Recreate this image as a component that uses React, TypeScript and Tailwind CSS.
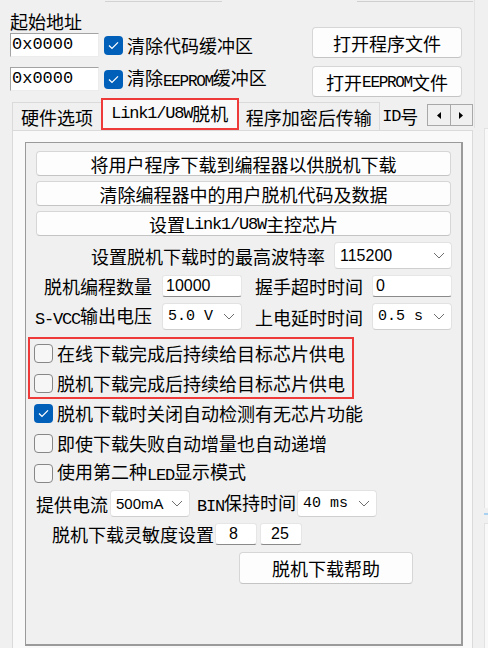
import React from "react";

function Box({ checked }: { checked?: boolean }) {
  if (checked)
    return (
      <span className="flex h-[19px] w-[19px] shrink-0 items-center justify-center rounded-[4px] bg-[#005fb8]">
        <svg width="11" height="9" viewBox="0 0 11 9" fill="none">
          <path d="M1 4.6L4 7.4L10 1.4" stroke="#ffffff" strokeWidth="1.3" />
        </svg>
      </span>
    );
  return <span className="h-[19px] w-[19px] shrink-0 rounded-[4px] border border-[#878787] bg-[#f6f6f6]" />;
}

function Chevron() {
  return (
    <svg width="12" height="7" viewBox="0 0 12 7" fill="none" className="shrink-0">
      <path d="M1 1L6 6L11 1" stroke="#6e6e6e" strokeWidth="1" />
    </svg>
  );
}

function Select({ value, className, textClass }: { value: string; className: string; textClass: string }) {
  return (
    <div
      className={`flex h-[27px] shrink-0 items-center justify-between rounded-[4px] border border-[#e2e2e2] border-b-[#cfcfcf] bg-white pl-[5px] pr-[6px] ${className}`}
    >
      <span className={textClass}>{value}</span>
      <Chevron />
    </div>
  );
}

function Field({ value, className }: { value: string; className: string }) {
  return (
    <div
      className={`flex h-[22px] shrink-0 items-center rounded-[3px] border border-[#e6e6e6] border-b-[#8a8a8a] bg-white font-['Liberation_Sans',sans-serif] text-[16px] ${className}`}
    >
      {value}
    </div>
  );
}

function Btn({ children, className }: { children: React.ReactNode; className: string }) {
  return (
    <div
      className={`flex shrink-0 items-center justify-center rounded-[4px] border border-[#d6d6d6] border-b-[#c4c4c4] bg-[#fdfdfd] leading-[20px] ${className}`}
    >
      {children}
    </div>
  );
}

function CheckRow({ checked, children, className }: { checked?: boolean; children: React.ReactNode; className: string }) {
  return (
    <div className={`flex h-[28px] items-center ${className}`}>
      <Box checked={checked} />
      <span className="ml-[4px] leading-[22px]">{children}</span>
    </div>
  );
}

// half-width latin inside chinese labels
const mono = "relative top-[1px] font-['Liberation_Mono',monospace] text-[17px] tracking-[-1.2px]";
const monoNarrow = "relative top-[1px] font-['Liberation_Mono',monospace] text-[16px] tracking-[-1.3px]";

export default function App() {
  return (
    <div className="flex h-[648px] w-[488px] overflow-hidden bg-[#f0f0f0] font-['Noto_Sans_CJK_SC',sans-serif] text-[18px] leading-[22px] text-black">
      <div className="flex w-[473px] shrink-0 flex-col">
        {/* bottoms of controls scrolled off the top */}
        <div className="flex h-[2px]">
          <div className="ml-[105px] w-[117px] border-b border-[#d2d2d2]" />
          <div className="ml-[135px] w-[117px] border-b border-[#cfcfcf]" />
        </div>

        <div className="flex h-[96px]">
          <div className="w-[312px] pl-[10px] pt-[7px]">
            <div className="h-[24px] leading-[24px]">起始地址</div>
            <div className="flex h-[24px] items-center">
              <div className="flex h-full w-[89px] items-center border border-[#ececec] border-l-[#a3a3a3] border-t-[#a3a3a3] bg-white pl-[1px] font-['Liberation_Mono',monospace] text-[17px]">
                0x0000
              </div>
              <span className="ml-[5px]">
                <Box checked />
              </span>
              <span className="ml-[4px]">清除代码缓冲区</span>
            </div>
            <div className="mt-[10px] flex h-[24px] items-center">
              <div className="flex h-full w-[89px] items-center border border-[#ececec] border-l-[#a3a3a3] border-t-[#a3a3a3] bg-white pl-[1px] font-['Liberation_Mono',monospace] text-[17px]">
                0x0000
              </div>
              <span className="ml-[5px]">
                <Box checked />
              </span>
              <span className="ml-[4px]">
                清除<span className={monoNarrow}>EEPROM</span>缓冲区
              </span>
            </div>
          </div>
          <div className="w-[150px] pt-[25px]">
            <Btn className="h-[31px]">打开程序文件</Btn>
            <Btn className="mt-[8px] h-[31px]">
              打开<span className={monoNarrow}>EEPROM</span>文件
            </Btn>
          </div>
        </div>

        {/* tab strip */}
        <div className="flex h-[32px] items-end pl-[12px]">
          <div className="flex h-[28px] w-[89px] items-center justify-center border-l border-t border-[#dadada] bg-[#f0f0f0]">
            硬件选项
          </div>
          <div className="flex h-[32px] w-[138px] items-center justify-center border-2 border-[#ef3a3a] bg-[#f9f9f9] pb-[2px]">
            <span className={mono}>Link1/U8W</span>脱机
          </div>
          <div className="flex h-[28px] w-[142px] items-center justify-center border-r border-t border-[#dadada] bg-[#f0f0f0]">
            程序加密后传输
          </div>
          <div className="flex h-[28px] w-[47px] items-center overflow-hidden whitespace-nowrap pl-[2px]">
            <span className={mono}>ID</span>号
          </div>
          <div className="mb-[4px] flex h-[22px] w-[46px] self-end border border-[#a8a8a8] bg-[#f0f0f0]">
            <div className="flex flex-1 items-center justify-center border-r border-[#a8a8a8]">
              <svg width="4" height="7" viewBox="0 0 4 7">
                <path d="M4 0L0 3.5L4 7Z" fill="#000" />
              </svg>
            </div>
            <div className="flex flex-1 items-center justify-center">
              <svg width="4" height="7" viewBox="0 0 4 7">
                <path d="M0 0L4 3.5L0 7Z" fill="#000" />
              </svg>
            </div>
          </div>
        </div>

        {/* tab panel */}
        <div className="ml-[12px] flex-1 border-l border-r border-t border-[#dadada] bg-[#f9f9f9] pl-[12px] pt-[11px]">
          <div className="flex h-[504px] w-[438px] flex-col border border-[#9a9a9a] border-r-2 border-b-2 bg-[#f0f0f0]">
            <Btn className="ml-[10px] mt-[8px] h-[25px] w-[415px]">将用户程序下载到编程器以供脱机下载</Btn>
            <Btn className="ml-[10px] mt-[5px] h-[25px] w-[415px]">清除编程器中的用户脱机代码及数据</Btn>
            <Btn className="ml-[10px] mt-[5px] h-[25px] w-[415px]">
              设置<span className={mono}>Link1/U8W</span>主控芯片
            </Btn>

            <div className="mt-[6px] flex h-[27px] items-center">
              <span className="ml-[65px] w-[234px] shrink-0">设置脱机下载时的最高波特率</span>
              <Select
                value="115200"
                className="ml-[9px] w-[118px]"
                textClass="font-['Liberation_Sans',sans-serif] text-[16px]"
              />
            </div>

            <div className="mt-[6px] flex h-[22px] items-center">
              <span className="w-[126px] shrink-0 text-right">脱机编程数量</span>
              <Field value="10000" className="ml-[10px] w-[80px] pl-[3px]" />
              <span className="w-[121px] shrink-0 text-right">握手超时时间</span>
              <Field value="0" className="ml-[9px] w-[80px] pl-[3px]" />
            </div>

            <div className="mt-[6px] flex h-[27px] items-center">
              <span className="w-[126px] shrink-0 text-right">
                <span className={mono}>S-VCC</span>输出电压
              </span>
              <Select
                value="5.0 V"
                className="ml-[10px] w-[80px]"
                textClass="font-['Liberation_Mono',monospace] text-[15px] whitespace-pre"
              />
              <span className="w-[121px] shrink-0 text-right">上电延时时间</span>
              <Select
                value="0.5 s"
                className="ml-[9px] w-[80px]"
                textClass="font-['Liberation_Mono',monospace] text-[15px] whitespace-pre"
              />
            </div>

            <div className="ml-[2px] mt-[7px] w-[326px] border-2 border-[#ef3a3a] pl-[4px]">
              <CheckRow className="">在线下载完成后持续给目标芯片供电</CheckRow>
              <CheckRow className="mt-[2px]">脱机下载完成后持续给目标芯片供电</CheckRow>
            </div>

            <CheckRow checked className="ml-[8px]">
              脱机下载时关闭自动检测有无芯片功能
            </CheckRow>
            <CheckRow className="ml-[8px] mt-[2px]">即使下载失败自动增量也自动递增</CheckRow>
            <CheckRow className="ml-[8px] mt-[2px]">
              使用第二种<span className={mono}>LED</span>显示模式
            </CheckRow>

            <div className="mt-[3px] flex h-[27px] items-center">
              <span className="ml-[10px] shrink-0">提供电流</span>
              <Select
                value="500mA"
                className="ml-[2px] w-[80px]"
                textClass="font-['Liberation_Sans',sans-serif] text-[15px]"
              />
              <span className="w-[106px] shrink-0 text-right">
                <span className={mono}>BIN</span>保持时间
              </span>
              <Select
                value="40 ms"
                className="ml-[1px] w-[80px]"
                textClass="font-['Liberation_Mono',monospace] text-[15px] whitespace-pre"
              />
            </div>

            <div className="mt-[6px] flex h-[22px] items-center">
              <span className="ml-[26px] shrink-0">脱机下载灵敏度设置</span>
              <Field value="8" className="ml-[1px] w-[42px] pl-[13px]" />
              <Field value="25" className="ml-[3px] w-[42px] pl-[10px]" />
            </div>

            <Btn className="ml-[213px] mt-[7px] h-[32px] w-[174px]">脱机下载帮助</Btn>
          </div>
        </div>
      </div>

      {/* neighbouring pane, mostly cut off */}
      <div className="flex w-[15px] shrink-0 flex-col">
        <div className="ml-[1px] h-[128px] border-l border-[#e2e2e2]" />
        <div className="ml-[11px] h-[380px] border-l border-t border-[#e2e2e2] bg-[#f9f9f9]" />
        <div className="ml-[11px] mt-[5px] h-[2px] bg-[#a9d1f1]" />
        <div className="ml-[11px] mt-[8px] flex-1 border-l border-t border-[#e2e2e2] bg-[#f9f9f9]" />
      </div>
    </div>
  );
}
